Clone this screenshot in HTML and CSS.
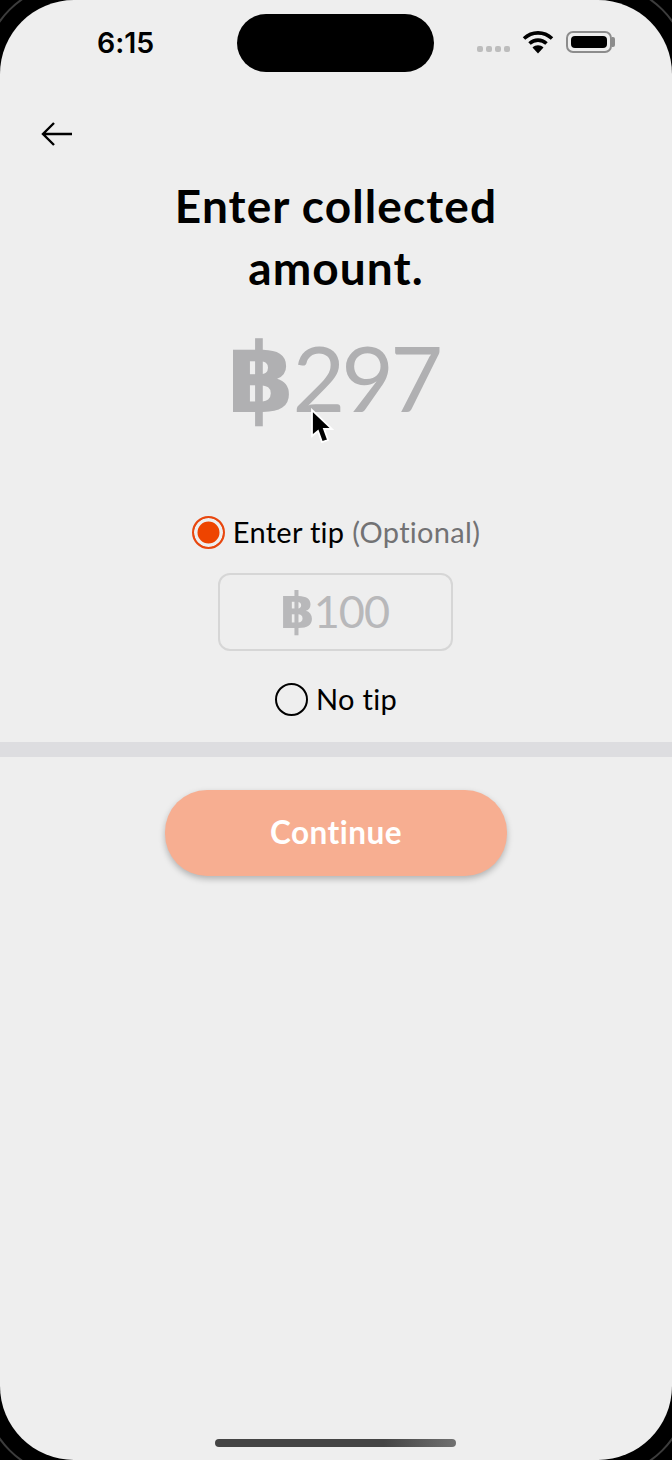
FILE: index.html
```html
<!DOCTYPE html>
<html lang="en">
<head>
  <meta charset="UTF-8" />
  <meta name="viewport" content="width=device-width, initial-scale=1.0" />
  <title>Enter collected amount</title>
  <link rel="stylesheet" href="styles.css">
</head>
<body>
  <div class="bezel"></div>
  <div class="screen">
    <!-- Status bar -->
    <div class="status-bar">
      <span class="time">6:15</span>
      <div class="status-icons">
        <div class="signal"><i></i><i></i><i></i><i></i></div>
        <svg class="wifi" width="32" height="24" viewBox="0 0 32 24">
          <path d="M2 8.5C10 1 22 1 30 8.5" fill="none" stroke="#000" stroke-width="3.6" />
          <path d="M7.5 13.5C12.5 9 19.5 9 24.5 13.5" fill="none" stroke="#000" stroke-width="3.6" />
          <path d="M10.5 17.5C13.5 14.4 18.5 14.4 21.5 17.5L16 23.5Z" fill="#000" />
        </svg>
        <div class="battery"><div class="battery-level"></div></div>
      </div>
    </div>
    <div class="island"></div>

    <!-- Back -->
    <div class="nav">
      <svg width="32" height="26" viewBox="0 0 32 26">
        <path d="M31 13H2M13 2L2 13L13 24" fill="none" stroke="#000" stroke-width="2.4" />
      </svg>
    </div>

    <h1 class="title">Enter collected<br>amount.</h1>
    <div class="amount"><b>฿</b>297</div>

    <!-- Tip -->
    <div class="tip-section">
      <label class="radio-row">
        <span class="radio radio-on"></span>
        <span class="radio-text">Enter tip <span class="muted">(Optional)</span></span>
      </label>
      <div class="tip-input"><b>฿</b>100</div>
      <label class="radio-row">
        <span class="radio"></span>
        <span class="radio-text">No tip</span>
      </label>
    </div>

    <div class="divider"></div>
    <button class="continue" type="button">Continue</button>

    <div class="home-bar"></div>

    <svg class="cursor" width="24" height="38" viewBox="0 0 24 38">
      <path d="M2 2V28L8 23L12 34L18 32L14 21H22Z" fill="#000" stroke="#fff" stroke-width="1.8" />
    </svg>
  </div>
</body>
</html>
```

FILE: styles.css
```css
* {
  box-sizing: border-box;
}
body {
  position: relative;
  height: 1460px;
  margin: 0;
  overflow: hidden;
  background: #000;
  font-family: 'Lato', 'DejaVu Sans', sans-serif;
  font-variant-ligatures: none;
  color: #000;
}
/* phone frame, only its corners are visible */
.bezel {
  position: absolute;
  top: -18px;
  left: -18px;
  width: 708px;
  height: 1496px;
  border: 2px solid #3c3c3c;
  border-radius: 92px;
}
.screen {
  position: relative;
  width: 672px;
  height: 1460px;
  background: #eeeeee;
  border-radius: 74px;
  overflow: hidden;
  display: flex;
  flex-direction: column;
  align-items: center;
}
.status-bar {
  width: 100%;
  height: 86px;
  padding: 26px 58px 0 97px;
  display: flex;
  justify-content: space-between;
  align-items: flex-start;
}
.time {
  font-family: 'Inter', sans-serif;
  font-size: 28.5px;
  font-weight: 600;
  line-height: 34px;
}
.status-icons {
  display: flex;
  align-items: center;
  gap: 12px;
  padding-top: 4px;
}
.signal {
  display: flex;
  gap: 3px;
  padding-top: 14px;
}
.signal i {
  width: 6px;
  height: 6px;
  border-radius: 2px;
  background: #bdbdbd;
}
.battery {
  position: relative;
  width: 46px;
  height: 22px;
  margin-right: 2px;
  padding: 3px;
  border: 2px solid #8c8c8c;
  border-radius: 7px;
}
.battery::after {
  content: "";
  position: absolute;
  top: 4px;
  right: -5px;
  width: 3px;
  height: 10px;
  border-radius: 0 2px 2px 0;
  background: #8c8c8c;
}
.battery-level {
  height: 100%;
  background: #000;
  border-radius: 4px;
}
.island {
  position: absolute;
  top: 14px;
  left: 237px;
  width: 197px;
  height: 58px;
  background: #000;
  border-radius: 29px;
}
.nav {
  width: 100%;
  height: 70px;
  padding: 35px 0 0 41px;
}
.title {
  margin: 19px 0 0;
  font-size: 46px;
  font-weight: 700;
  letter-spacing: 1.1px;
  line-height: 62px;
  text-align: center;
}
.amount {
  margin-top: 28px;
  padding-right: 6px;
  font-size: 91px;
  letter-spacing: -4px;
  line-height: 100px;
  color: #b0b0b2;
}
.amount b {
  margin-right: 2px;
  font-size: 97px;
  line-height: 0;
}
.amount b,
.tip-input b {
  font-family: 'DejaVu Sans', sans-serif;
  font-weight: 700;
}
.tip-section {
  margin-top: 88px;
  display: flex;
  flex-direction: column;
  align-items: center;
}
.radio-row {
  display: flex;
  align-items: center;
  gap: 8px;
  height: 34px;
  font-size: 29px;
  letter-spacing: 0.3px;
}
.radio-text {
  padding-bottom: 2px;
}
.muted {
  color: #727274;
}
.radio {
  width: 33px;
  height: 33px;
  border: 2.5px solid #000;
  border-radius: 50%;
}
.radio-on {
  border-color: #e8470f;
  background: #ee4400;
  box-shadow: inset 0 0 0 3.5px #eeeeee;
}
.tip-input {
  width: 235px;
  height: 78px;
  margin: 24px 0 31px;
  padding-right: 3px;
  border: 2px solid #d6d6d6;
  border-radius: 12px;
  text-align: center;
  font-size: 45px;
  letter-spacing: -1px;
  line-height: 72px;
  color: #b8b8ba;
}
.tip-input b {
  font-size: 50px;
  line-height: 0;
}
.divider {
  width: 100%;
  height: 15px;
  margin-top: 26px;
  background: #dddde0;
}
.continue {
  width: 342px;
  height: 86px;
  margin-top: 33px;
  padding-bottom: 3px;
  border: none;
  border-radius: 42px;
  background: #f7ae91;
  color: #fff;
  font-family: inherit;
  font-variant-ligatures: none;
  font-size: 31.5px;
  font-weight: 700;
  letter-spacing: 0.5px;
  box-shadow: 0 3px 6px rgba(0, 0, 0, 0.25);
}
.home-bar {
  position: absolute;
  left: 215px;
  bottom: 13px;
  width: 241px;
  height: 8px;
  border-radius: 4px;
  background: linear-gradient(to right, #444, #444 70%, #707070);
}
.cursor {
  position: absolute;
  top: 408px;
  left: 310px;
}
```
